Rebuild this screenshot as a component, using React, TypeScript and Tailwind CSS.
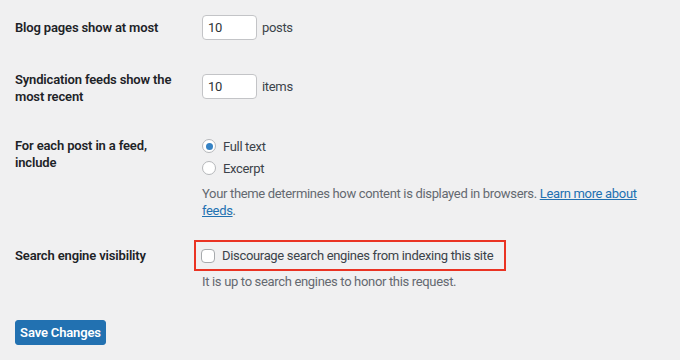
import React from "react";

const Radio = ({ checked, label }: { checked?: boolean; label: string }) => (
  <label className="flex h-[22px] items-center gap-[7px]">
    <span className="flex h-[14px] w-[14px] items-center justify-center rounded-full border border-[#b5b7ba] bg-white">
      {checked && <span className="h-[7px] w-[7px] rounded-full bg-[#3582c4]" />}
    </span>
    <span>{label}</span>
  </label>
);

const NumberField = ({ value, unit }: { value: string; unit: string }) => (
  <div className="flex items-center gap-[5px]">
    <div className="flex h-[25px] w-[55px] items-center rounded-[4px] border border-[#c3c4c7] bg-white pl-[5px] text-[#2c3338]">
      {value}
    </div>
    <span>{unit}</span>
  </div>
);

export default function App() {
  return (
    <div
      className="h-[360px] w-[680px] overflow-hidden bg-[#f0f0f1] pl-[15px] text-[13px] leading-[17px] tracking-[-0.33px] text-[#3c434a]"
      style={{ fontFamily: "Roboto, 'Liberation Sans', sans-serif" }}
    >
      {/* blog pages */}
      <div className="flex pt-[15px]">
        <div className="mt-[4px] w-[187px] shrink-0 font-semibold tracking-[-0.15px] text-[#1d2327]">
          Blog pages show at most
        </div>
        <NumberField value="10" unit="posts" />
      </div>

      {/* syndication */}
      <div className="mt-[31px] flex">
        <div className="w-[187px] shrink-0 font-semibold tracking-[-0.15px] text-[#1d2327]">
          Syndication feeds show the
          <br />
          most recent
        </div>
        <div className="mt-[3px]">
          <NumberField value="10" unit="items" />
        </div>
      </div>

      {/* feed content */}
      <div className="mt-[32px] flex">
        <div className="w-[187px] shrink-0 font-semibold tracking-[-0.15px] text-[#1d2327]">
          For each post in a feed,
          <br />
          include
        </div>
        <div className="-mt-[2px]">
          <Radio checked label="Full text" />
          <Radio label="Excerpt" />
          <p className="mt-[6px] whitespace-nowrap text-[#646970]">
            Your theme determines how content is displayed in browsers.{" "}
            <a href="#" className="text-[#2271b1] underline">
              Learn more about
              <br />
              feeds
            </a>
            .
          </p>
        </div>
      </div>

      {/* search engine visibility */}
      <div className="mt-[21px] flex">
        <div className="mt-[7px] w-[187px] shrink-0 font-semibold tracking-[-0.15px] text-[#1d2327]">
          Search engine visibility
        </div>
        <div>
          <div className="-ml-[8px] flex h-[31px] items-center gap-[7px] border-2 border-[#ea3323] pl-[5px] pr-[11px]">
            <span className="h-[14px] w-[14px] rounded-[4px] border border-[#a7aaad] bg-white" />
            <span>Discourage search engines from indexing this site</span>
          </div>
          <p className="mt-[2px] text-[#646970]">It is up to search engines to honor this request.</p>
        </div>
      </div>

      <button className="mt-[30px] flex h-[25px] w-[91px] items-center justify-center whitespace-nowrap rounded-[3px] border border-[#2271b1] bg-[#2271b1] font-semibold tracking-[-0.15px] text-white">
        Save Changes
      </button>
    </div>
  );
}
